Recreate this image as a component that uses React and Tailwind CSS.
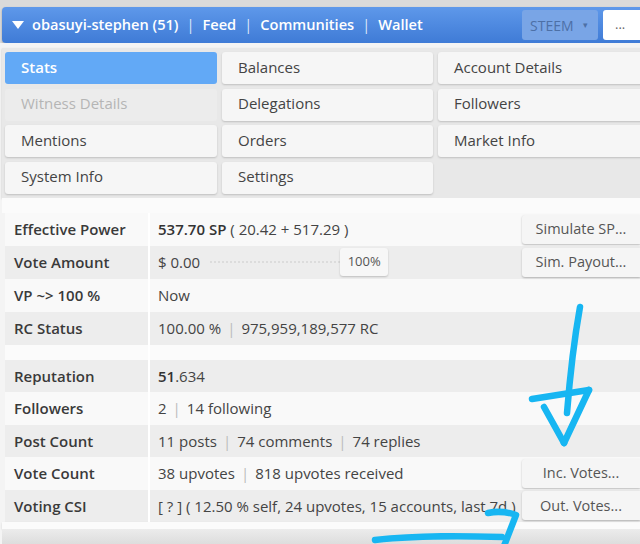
import React from "react";

const tabs = [
  ["Stats", "active"],
  ["Balances"],
  ["Account Details"],
  ["Witness Details", "disabled"],
  ["Delegations"],
  ["Followers"],
  ["Mentions"],
  ["Orders"],
  ["Market Info"],
  ["System Info"],
  ["Settings"],
  [null, "empty"],
];

function Sep() {
  return <span className="text-[#bbb] mx-[6px]">|</span>;
}

function Btn({ children }) {
  return (
    <div className="w-[118px] h-[29px] shrink-0 bg-[#f5f5f5] rounded-l-[3px] shadow-[0_1px_2px_rgba(0,0,0,0.25)] flex items-center justify-center text-[#555] text-[14.5px]">
      {children}
    </div>
  );
}

function Row({ label, shade, children, btn, h = "h-[33px]" }) {
  return (
    <div className={`flex ${h} ${shade ? "bg-[#ededed]" : "bg-[#f9f9f9]"}`}>
      <div className="w-[145px] shrink-0 pl-[9px] flex items-center font-semibold text-[#3a3a3a] border-r-2 border-white">
        {label}
      </div>
      <div className="flex-1 flex items-center pl-[8px] text-[#444] min-w-0">
        <div className="flex-1 flex items-center whitespace-nowrap">{children}</div>
        {btn && <Btn>{btn}</Btn>}
      </div>
    </div>
  );
}

export default function App() {
  return (
    <div
      className="w-[640px] h-[544px] overflow-hidden relative bg-[#dadada] text-[15px]"
      style={{ fontFamily: '"Open Sans", "Noto Sans", sans-serif' }}
    >
      <div className="pt-[7px] pl-[2px]">
        <div className="h-[36px] rounded-l-[4px] bg-gradient-to-b from-[#5e98ea] to-[#3f7bd6] flex items-center shadow-[0_1px_2px_rgba(0,0,0,0.3)]">
          <svg width="14" height="10" viewBox="0 0 14 10" className="ml-[9px] mr-[7px]">
            <path d="M1 1 L13 1 L7 9 Z" fill="white" />
          </svg>
          <div className="text-white font-semibold text-[14.6px] whitespace-nowrap flex-1 pb-[1px]">
            obasuyi-stephen (51)<span className="mx-[8px] font-normal opacity-80">|</span>Feed
            <span className="mx-[8px] font-normal opacity-80">|</span>Communities
            <span className="mx-[8px] font-normal opacity-80">|</span>Wallet
          </div>
          <div className="w-[76px] h-[30px] bg-[#79a5e6] rounded-[3px] flex items-center pl-[8px] text-[#4d70a6] text-[14px] mr-[5px]">
            STEEM<span className="ml-[9px] text-[9px]">▾</span>
          </div>
          <div className="w-[37px] h-[30px] bg-white rounded-l-[3px] flex items-center pl-[12px] text-[#666] text-[13px]">
            ...
          </div>
        </div>
      </div>
      <div className="bg-[#f4f4f4] pt-[5px] pl-[2px]">
        <div className="bg-[#e8e8e8] pt-[4px] pb-[4px] pl-[3px] shadow-[0_1px_2px_rgba(0,0,0,0.2)]">
          <div className="grid grid-cols-[212px_211px_212px] gap-x-[5px] gap-y-[4.5px]">
            {tabs.map(([t, s], i) => {
              if (s === "empty") return <div key={i} className="h-[32px]" />;
              const cls =
                s === "active"
                  ? "bg-[#62a9f6] text-white font-semibold"
                  : s === "disabled"
                  ? "bg-[#ececec] text-[#b5b5b5]"
                  : "bg-[#f6f6f6] text-[#444] shadow-[0_1px_2px_rgba(0,0,0,0.18)]";
              return (
                <div key={i} className={`h-[32px] rounded-[3px] flex items-center pl-[16px] pb-[2px] ${cls}`}>
                  {t}
                </div>
              );
            })}
          </div>
        </div>
        <div className="h-[15px] bg-[#fbfbfb]" />
        <div className="ml-[3px] bg-[#fbfbfb]">
          <Row label="Effective Power" btn="Simulate SP...">
            <span className="font-semibold text-[#333]">537.70 SP</span>
            <span className="ml-[4px]">( 20.42 + 517.29 )</span>
          </Row>
          <Row label="Vote Amount" shade btn="Sim. Payout...">
            <span>$ 0.00</span>
            <div className="ml-[10px] w-[130px] border-t-2 border-dotted border-[#dcdcdc]" />
            <div className="w-[48px] h-[28px] bg-[#f7f7f7] rounded-[3px] shadow-[0_1px_2px_rgba(0,0,0,0.2)] flex items-center justify-center text-[13px] text-[#555]">
              100%
            </div>
          </Row>
          <Row label="VP ~> 100 %">Now</Row>
          <Row label="RC Status" shade>
            100.00 %<Sep />975,959,189,577 RC
          </Row>
          <div className="h-[15px] bg-[#fbfbfb] flex">
            <div className="w-[145px] border-r-2 border-white" />
          </div>
          <Row label="Reputation" shade h="h-[32.5px]">
            <span className="font-semibold text-[#333]">51</span>.634
          </Row>
          <Row label="Followers" h="h-[32.5px]">
            2<Sep />14 following
          </Row>
          <Row label="Post Count" shade h="h-[32.5px]">
            11 posts<Sep />74 comments<Sep />74 replies
          </Row>
          <Row label="Vote Count" btn="Inc. Votes..." h="h-[32.5px]">
            38 upvotes<Sep />818 upvotes received
          </Row>
          <Row label="Voting CSI" shade btn="Out. Votes..." h="h-[32.5px]">
            [ ? ] ( 12.50 % self, 24 upvotes, 15 accounts, last 7d )
          </Row>
        </div>
        <div className="h-[7px] bg-[#fbfbfb] shadow-[0_1px_2px_rgba(0,0,0,0.15)]" />
        <div className="h-[22px] bg-gradient-to-b from-[#ececec] to-[#d6d6d6]" />
      </div>
      <svg className="absolute inset-0 pointer-events-none" width="640" height="544">
        <g stroke="#17b6f2" strokeWidth="6.5" strokeLinecap="round" strokeLinejoin="round" fill="none">
          <path d="M580 307 C575 335 570 375 567 413" />
          <path d="M532 399 L589 390" />
          <path d="M589 390 L564 443" />
          <path d="M544 407 L564 443" />
          <path d="M375 540 C420 535 465 536 502 537" />
          <path d="M488 513 Q502 510 516 515 L504 546" />
        </g>
      </svg>
    </div>
  );
}
